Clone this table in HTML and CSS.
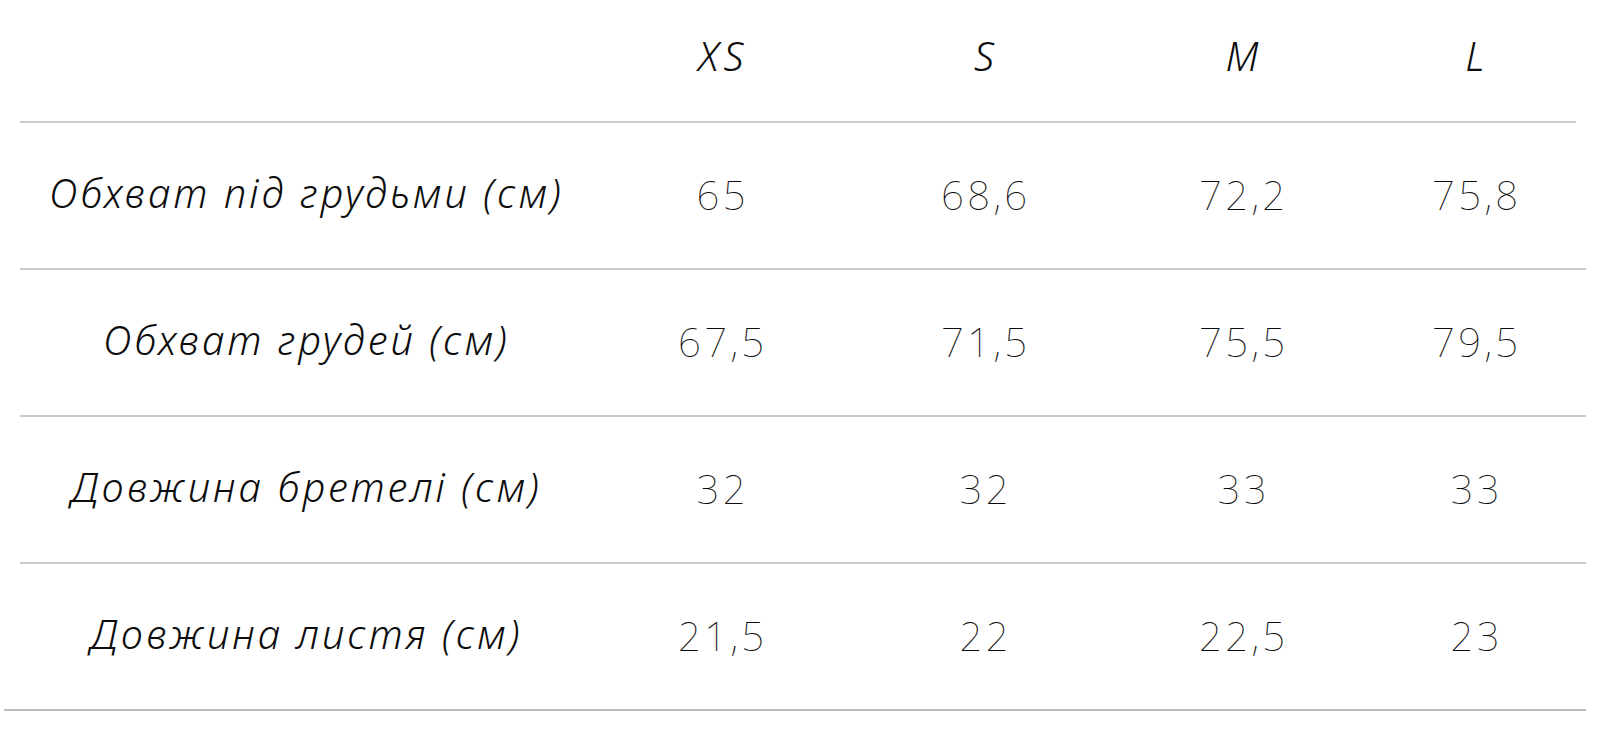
FILE: index.html
```html
<!DOCTYPE html>
<html lang="uk">
<head>
<meta charset="utf-8">
<title>Розмірна сітка</title>
<link rel="stylesheet" href="styles.css">
</head>
<body>
<div class="size-table">
  <div class="row head">
    <div class="cell label"></div>
    <div class="cell size">XS</div>
    <div class="cell size">S</div>
    <div class="cell size">M</div>
    <div class="cell size">L</div>
  </div>
  <div class="row">
    <div class="cell label">Обхват під грудьми (см)</div>
    <div class="cell num">65</div>
    <div class="cell num">68,6</div>
    <div class="cell num">72,2</div>
    <div class="cell num">75,8</div>
  </div>
  <div class="row">
    <div class="cell label">Обхват грудей (см)</div>
    <div class="cell num">67,5</div>
    <div class="cell num">71,5</div>
    <div class="cell num">75,5</div>
    <div class="cell num">79,5</div>
  </div>
  <div class="row">
    <div class="cell label">Довжина бретелі (см)</div>
    <div class="cell num">32</div>
    <div class="cell num">32</div>
    <div class="cell num">33</div>
    <div class="cell num">33</div>
  </div>
  <div class="row last">
    <div class="cell label">Довжина листя (см)</div>
    <div class="cell num">21,5</div>
    <div class="cell num">22</div>
    <div class="cell num">22,5</div>
    <div class="cell num">23</div>
  </div>
</div>
</body>
</html>
```
FILE: styles.css
```css
html, body {
  margin: 0;
  padding: 0;
  background: #ffffff;
}

body {
  font-family: "Noto Sans", "DejaVu Sans", sans-serif;
  color: #0c0c0c;
}

.size-table {
  display: flex;
  flex-direction: column;
  width: 1602px;
}

.row {
  display: grid;
  grid-template-columns: 570px 262px 264px 252px 214px;
  height: 145px;
  margin: 0 16px 0 20px;
  border-bottom: 2px solid #cbcbcb;
  align-items: center;
}

.row.head {
  height: 111px;
  padding-bottom: 10px;
  margin-right: 26px;
}

.row.last {
  margin-left: 4px;
  padding-left: 16px;
  border-bottom-color: #bdbdbd;
}

.cell {
  text-align: center;
  font-size: 40px;
  line-height: 1;
  white-space: nowrap;
}

.label {
  font-style: italic;
  font-weight: 300;
  letter-spacing: 3.1px;
  padding: 0 0 6px 3px;
}

.size {
  font-style: italic;
  font-weight: 300;
  letter-spacing: 5px;
  padding-left: 5px;
}

.num {
  font-weight: 100;
  letter-spacing: 3.5px;
  padding: 0 0 2px 3.5px;
}
```
